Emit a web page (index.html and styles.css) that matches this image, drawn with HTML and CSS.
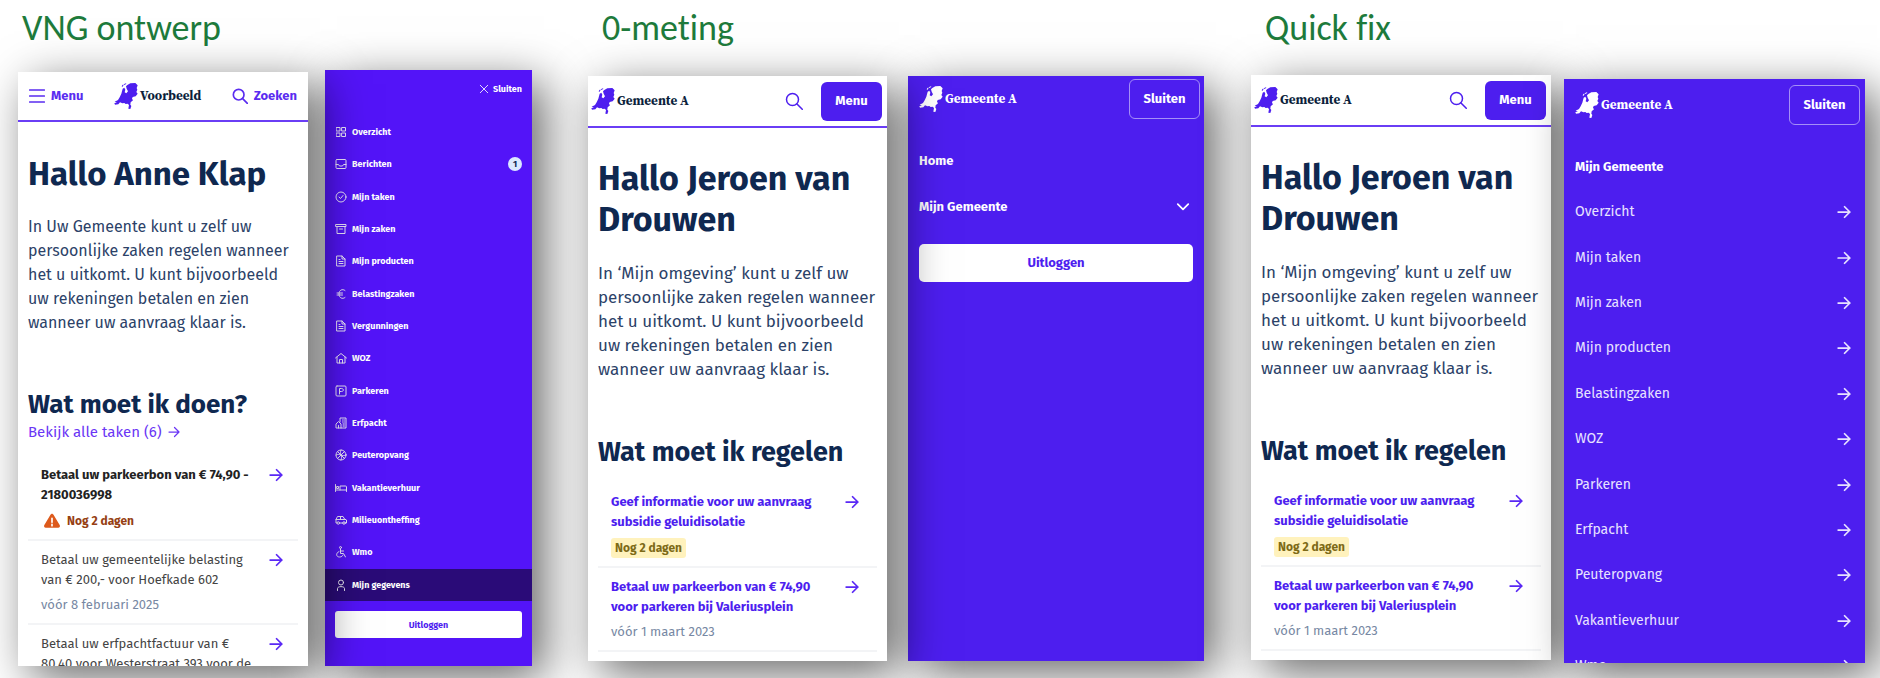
FILE: index.html
```html
<!DOCTYPE html>
<html lang="nl">
<head>
<meta charset="utf-8">
<title>Vergelijking mobiel menu</title>
<link rel="stylesheet" href="styles.css">
</head>
<body>
<svg class="defs" aria-hidden="true">
  <symbol id="nl" viewBox="0 0 70 78">
    <path fill-rule="evenodd" d="M39 6 48 1 63 0 70 7 67 15 69 20 66 27 70 32 64 40 55 42 53 47 56 52 49 58 48 65 51 69 48 78 42 77 44 66 40 62 34 63 30 60 24 61 17 58 12 64 2 65 0 60 8 59 1 56 11 51 16 43 21 32 25 17 30 14 33 20 31 28 36 31 41 25 37 17 35 10Z"/>
    <path d="M22 10l3-5 3 1-4 6zM28 4l7-3 1 2-7 3z"/>
  </symbol>
  <symbol id="search" viewBox="0 0 24 24"><circle cx="10" cy="10" r="8"/><path d="m16 16 7 7"/></symbol>
  <symbol id="bars" viewBox="0 0 24 24"><path d="M1 3h22M1 12h22M1 21h22"/></symbol>
  <symbol id="arrow" viewBox="0 0 24 24"><path d="M2 12h20M13 3l9 9-9 9"/></symbol>
  <symbol id="chevron" viewBox="0 0 24 24"><path d="m3 7 9 9 9-9"/></symbol>
  <symbol id="close" viewBox="0 0 24 24"><path d="m3 3 18 18M21 3 3 21"/></symbol>
  <symbol id="warn" viewBox="0 0 24 24"><path d="M12 1c1 0 2 1 2.500 2L23.500 18c1 2 0 4-2 4h-19c-2 0-3-2-2-4L9.500 3c.5-1 1.500-2 2.500-2z" fill="#dd5a1c" stroke="none"/><path d="M12 8v6M12 17v2" stroke="#fff"/></symbol>
  <symbol id="grid" viewBox="0 0 24 24"><path d="M3 3h7v7H3zM14 3h7v7h-7zM3 14h7v7H3zM14 14h7v7h-7z"/></symbol>
  <symbol id="inbox" viewBox="0 0 24 24"><rect x="2" y="3" width="20" height="18" rx="2"/><path d="M2 13h5l2 3h6l2-3h5"/></symbol>
  <symbol id="check" viewBox="0 0 24 24"><circle cx="12" cy="12" r="10"/><path d="m8 12 3 3 5-6"/></symbol>
  <symbol id="archive" viewBox="0 0 24 24"><path d="M2 3h20v4H2zM4 7v14h16V7M9 12h6"/></symbol>
  <symbol id="doc" viewBox="0 0 24 24"><path d="M4 2h10l6 6v14H4zM14 2v6h6M8 9h2M8 13h8M8 17h8"/></symbol>
  <symbol id="euro" viewBox="0 0 24 24"><path d="M20 5c-5-4-12-1-12 7s7 11 12 7M4 10h11M4 14h11"/></symbol>
  <symbol id="home" viewBox="0 0 24 24"><path d="m1 12 11-9 11 9M4 10v12h16V10M9 22v-7h6v7"/></symbol>
  <symbol id="park" viewBox="0 0 24 24"><rect x="2" y="2" width="20" height="20" rx="2"/><path d="M9 18V7h4c5 0 5 6 0 6H9"/></symbol>
  <symbol id="building" viewBox="0 0 24 24"><path d="M10 10V2h12v20H2v-8l5-5 5 5v8M7 22v-5M15 6h1M18 6h1M15 10h1M18 10h1M16 14h1M18 14h1M16 18h1M18 18h1"/></symbol>
  <symbol id="ball" viewBox="0 0 24 24"><circle cx="12" cy="12" r="10"/><path d="M5 5l14 14M19 5 5 19M12 2c-2 4-1 7 0 10s2 6 0 10M2 12c4-2 7-1 10 0s6 2 10 0"/></symbol>
  <symbol id="bed" viewBox="0 0 24 24"><path d="M1 5v14M1 16h22M23 19v-9a2 2 0 0 0-2-2H10v8M4 9h3v4H4z"/></symbol>
  <symbol id="car" viewBox="0 0 24 24"><path d="M4 18H2v-7l3-6h11l3 5 4 2v6h-2M9 18h7M2 11h17M11 5v6"/><circle cx="6.500" cy="18" r="2.500"/><circle cx="18" cy="18" r="2.500"/></symbol>
  <symbol id="wheel" viewBox="0 0 24 24"><circle cx="11" cy="3" r="2"/><path d="M11 6v9h6l4 7M11 10h6M8 11c-7 3-6 11 1 11 4 0 6-2 7-4"/></symbol>
  <symbol id="user" viewBox="0 0 24 24"><circle cx="12" cy="7" r="5"/><path d="M5 23v-4c0-5 14-5 14 0v4"/></symbol>
</svg>

<main class="board">
  <section class="group group-design">
    <h2 class="title">VNG ontwerp</h2>
    <div class="screens">
      <article class="screen front design">
        <header class="bar">
          <button class="plain"><svg class="ico i16"><use href="#bars"/></svg>Menu</button>
          <span class="brand"><svg class="logo"><use href="#nl"/></svg>Voorbeeld</span>
          <button class="plain"><svg class="ico i16"><use href="#search"/></svg>Zoeken</button>
        </header>
        <div class="content">
          <h1>Hallo Anne Klap</h1>
          <p class="intro">In Uw Gemeente kunt u zelf uw<br>persoonlijke zaken regelen wanneer<br>het u uitkomt. U kunt bijvoorbeeld<br>uw rekeningen betalen en zien<br>wanneer uw aanvraag klaar is.</p>
          <h2 class="sub">Wat moet ik doen?</h2>
          <a class="all" href="#taken">Bekijk alle taken (6)<svg class="ico i12"><use href="#arrow"/></svg></a>
          <ul class="tasks">
            <li><a href="#t1"><strong>Betaal uw parkeerbon van € 74,90 -<br>2180036998</strong><svg class="ico i14"><use href="#arrow"/></svg></a>
              <span class="alert"><svg class="ico i16"><use href="#warn"/></svg>Nog 2 dagen</span></li>
            <li><a href="#t2"><span>Betaal uw gemeentelijke belasting<br>van € 200,- voor Hoefkade 602</span><svg class="ico i14"><use href="#arrow"/></svg></a>
              <span class="date">vóór 8 februari 2025</span></li>
            <li><a href="#t3"><span>Betaal uw erfpachtfactuur van €<br>80,40 voor Westerstraat 393 voor de</span><svg class="ico i14"><use href="#arrow"/></svg></a></li>
          </ul>
        </div>
      </article>
      <nav class="screen icon-menu" aria-label="Menu ontwerp">
        <div class="close-row"><button class="plain"><svg class="ico i10"><use href="#close"/></svg>Sluiten</button></div>
        <ul>
          <li><a href="#m"><svg class="ico i12"><use href="#grid"/></svg>Overzicht</a></li>
          <li><a href="#m"><svg class="ico i12"><use href="#inbox"/></svg>Berichten<span class="count">1</span></a></li>
          <li><a href="#m"><svg class="ico i12"><use href="#check"/></svg>Mijn taken</a></li>
          <li><a href="#m"><svg class="ico i12"><use href="#archive"/></svg>Mijn zaken</a></li>
          <li><a href="#m"><svg class="ico i12"><use href="#doc"/></svg>Mijn producten</a></li>
          <li><a href="#m"><svg class="ico i12"><use href="#euro"/></svg>Belastingzaken</a></li>
          <li><a href="#m"><svg class="ico i12"><use href="#doc"/></svg>Vergunningen</a></li>
          <li><a href="#m"><svg class="ico i12"><use href="#home"/></svg>WOZ</a></li>
          <li><a href="#m"><svg class="ico i12"><use href="#park"/></svg>Parkeren</a></li>
          <li><a href="#m"><svg class="ico i12"><use href="#building"/></svg>Erfpacht</a></li>
          <li><a href="#m"><svg class="ico i12"><use href="#ball"/></svg>Peuteropvang</a></li>
          <li><a href="#m"><svg class="ico i12"><use href="#bed"/></svg>Vakantieverhuur</a></li>
          <li><a href="#m"><svg class="ico i12"><use href="#car"/></svg>Milieuontheffing</a></li>
          <li><a href="#m"><svg class="ico i12"><use href="#wheel"/></svg>Wmo</a></li>
          <li class="active"><a href="#m"><svg class="ico i12"><use href="#user"/></svg>Mijn gegevens</a></li>
        </ul>
        <button class="logout">Uitloggen</button>
      </nav>
    </div>
  </section>

  <section class="group group-base">
    <h2 class="title">0-meting</h2>
    <div class="screens">
      <article class="screen front built">
        <header class="bar">
          <span class="brand"><svg class="logo"><use href="#nl"/></svg>Gemeente A</span>
          <button class="plain find" aria-label="Zoeken"><svg class="ico i18"><use href="#search"/></svg></button>
          <button class="solid">Menu</button>
        </header>
        <div class="content">
          <h1>Hallo Jeroen van<br>Drouwen</h1>
          <p class="intro">In ‘Mijn omgeving’ kunt u zelf uw<br>persoonlijke zaken regelen wanneer<br>het u uitkomt. U kunt bijvoorbeeld<br>uw rekeningen betalen en zien<br>wanneer uw aanvraag klaar is.</p>
          <h2 class="sub">Wat moet ik regelen</h2>
          <ul class="tasks">
            <li><a href="#t1"><strong>Geef informatie voor uw aanvraag<br>subsidie geluidisolatie</strong><svg class="ico i14"><use href="#arrow"/></svg></a>
              <span class="tag">Nog 2 dagen</span></li>
            <li><a href="#t2"><strong>Betaal uw parkeerbon van € 74,90<br>voor parkeren bij Valeriusplein</strong><svg class="ico i14"><use href="#arrow"/></svg></a>
              <span class="date">vóór 1 maart 2023</span></li>
          </ul>
        </div>
      </article>
      <nav class="screen flat-menu" aria-label="Menu 0-meting">
        <header class="menu-bar">
          <span class="brand"><svg class="logo"><use href="#nl"/></svg>Gemeente A</span>
          <button class="outline">Sluiten</button>
        </header>
        <ul>
          <li><a href="#home"><strong>Home</strong></a></li>
          <li><a href="#mijn"><strong>Mijn Gemeente</strong><svg class="ico i14"><use href="#chevron"/></svg></a></li>
        </ul>
        <button class="logout">Uitloggen</button>
      </nav>
    </div>
  </section>

  <section class="group group-fix">
    <h2 class="title">Quick fix</h2>
    <div class="screens">
      <article class="screen built">
        <header class="bar">
          <span class="brand"><svg class="logo"><use href="#nl"/></svg>Gemeente A</span>
          <button class="plain find" aria-label="Zoeken"><svg class="ico i18"><use href="#search"/></svg></button>
          <button class="solid">Menu</button>
        </header>
        <div class="content">
          <h1>Hallo Jeroen van<br>Drouwen</h1>
          <p class="intro">In ‘Mijn omgeving’ kunt u zelf uw<br>persoonlijke zaken regelen wanneer<br>het u uitkomt. U kunt bijvoorbeeld<br>uw rekeningen betalen en zien<br>wanneer uw aanvraag klaar is.</p>
          <h2 class="sub">Wat moet ik regelen</h2>
          <ul class="tasks">
            <li><a href="#t1"><strong>Geef informatie voor uw aanvraag<br>subsidie geluidisolatie</strong><svg class="ico i14"><use href="#arrow"/></svg></a>
              <span class="tag">Nog 2 dagen</span></li>
            <li><a href="#t2"><strong>Betaal uw parkeerbon van € 74,90<br>voor parkeren bij Valeriusplein</strong><svg class="ico i14"><use href="#arrow"/></svg></a>
              <span class="date">vóór 1 maart 2023</span></li>
          </ul>
        </div>
      </article>
      <nav class="screen front flat-menu" aria-label="Menu quick fix">
        <header class="menu-bar">
          <span class="brand"><svg class="logo"><use href="#nl"/></svg>Gemeente A</span>
          <button class="outline">Sluiten</button>
        </header>
        <ul>
          <li><a href="#m"><strong>Mijn Gemeente</strong></a></li>
          <li><a href="#m">Overzicht<svg class="ico i14"><use href="#arrow"/></svg></a></li>
          <li><a href="#m">Mijn taken<svg class="ico i14"><use href="#arrow"/></svg></a></li>
          <li><a href="#m">Mijn zaken<svg class="ico i14"><use href="#arrow"/></svg></a></li>
          <li><a href="#m">Mijn producten<svg class="ico i14"><use href="#arrow"/></svg></a></li>
          <li><a href="#m">Belastingzaken<svg class="ico i14"><use href="#arrow"/></svg></a></li>
          <li><a href="#m">WOZ<svg class="ico i14"><use href="#arrow"/></svg></a></li>
          <li><a href="#m">Parkeren<svg class="ico i14"><use href="#arrow"/></svg></a></li>
          <li><a href="#m">Erfpacht<svg class="ico i14"><use href="#arrow"/></svg></a></li>
          <li><a href="#m">Peuteropvang<svg class="ico i14"><use href="#arrow"/></svg></a></li>
          <li><a href="#m">Vakantieverhuur<svg class="ico i14"><use href="#arrow"/></svg></a></li>
          <li><a href="#m">Wmo<svg class="ico i14"><use href="#arrow"/></svg></a></li>
        </ul>
      </nav>
    </div>
  </section>
</main>
</body>
</html>
```

FILE: styles.css
```css
* { box-sizing: border-box; }

:root {
  --violet: #4d1eef;
  --navy: #0f2850;
  --body: #2c4268;
}

body {
  margin: 0;
  background: #fff;
  color: var(--body);
  font: 13px/20px "Fira Sans", "Noto Sans", sans-serif;
}

h1, h2, p, ul { margin: 0; padding: 0; }
ul { list-style: none; }
a { color: inherit; text-decoration: none; }
button { font: inherit; color: inherit; background: none; border: 0; padding: 0; }
h1, .sub, strong { font-weight: 700; }

.defs { position: absolute; width: 0; height: 0; }

.ico { flex: none; fill: none; stroke: currentColor; stroke-width: 2.5; stroke-linecap: round; stroke-linejoin: round; }
.i10 { width: 10px; height: 10px; }
.i12 { width: 12px; height: 12px; }
.i14 { width: 14px; height: 14px; stroke-width: 3; }
.i16 { width: 16px; height: 16px; }
.i18 { width: 18px; height: 18px; }

/* Board: three groups of two screens */
.board {
  display: grid;
  grid-template-columns: 570fr 663fr 614fr;
  height: 100vh;
  padding: 0 15px 0 18px;
  overflow: hidden;
}
.group { display: flex; flex-direction: column; min-height: 0; }
.group-design { padding-right: 56px; }
.group-base { padding-right: 47px; }

.title {
  padding: 8px 4px 0;
  color: #1e7b3c;
  font: 400 36px/40px Calibri, Carlito, Lato, sans-serif;
  font-variant-ligatures: none;
}
.group-base .title, .group-fix .title { padding-left: 14px; }

.screens { flex: 1; display: grid; grid-template-rows: minmax(0, 1fr); min-height: 0; }
.group-design .screens { grid-template-columns: 290fr 207fr; gap: 17px; padding: 22px 0 12px; }
.group-base .screens { grid-template-columns: 299fr 296fr; gap: 21px; padding: 28px 0 17px; }
.group-fix .screens { grid-template-columns: 300fr 301fr; gap: 13px; padding: 27px 0 15px; }
.group-fix .built { margin-bottom: 3px; }
.group-fix .flat-menu { margin-top: 4px; }
.design { margin-top: 2px; }

.screen {
  display: flex;
  flex-direction: column;
  min-width: 0;
  overflow: hidden;
  background: #fff;
  box-shadow: 12px 12px 44px rgba(0, 0, 0, .6);
}
.front { position: relative; z-index: 1; }

/* Page header */
.bar {
  display: flex;
  align-items: center;
  flex: none;
  height: 52px;
  border-bottom: 2px solid #6a3df5;
}
.design .bar { height: 50px; padding: 0 11px; justify-content: space-between; color: #5a2cf0; }
.plain { display: flex; align-items: center; gap: 6px; font-weight: 700; }
.brand {
  display: flex;
  align-items: center;
  gap: 2px;
  color: #0c1f3c;
  font: 700 13px/20px "Source Serif Pro", "Source Serif 4", "Noto Serif", "Liberation Serif", serif;
}
.logo { width: 24px; height: 26px; fill: var(--violet); }
.built .bar { padding: 0 5px 0 3px; }
.find { margin-left: auto; color: var(--violet); }
.find .ico { stroke-width: 2; }
.solid {
  margin-left: 18px;
  width: 61px;
  height: 39px;
  border-radius: 6px;
  background: var(--violet);
  color: #fff;
  font-weight: 700;
}

/* Page content */
.content { padding: 32px 10px 0; white-space: nowrap; }
.built .content { padding: 30px 10px 0; }
h1 { color: var(--navy); font-size: 33px; line-height: 41px; }
.built h1 { font-size: 34px; }
.intro { padding-top: 20px; font-size: 16px; line-height: 24px; }
.built .intro { padding-top: 22px; font-size: 17px; }
.sub { padding-top: 53px; color: var(--navy); font-size: 26px; line-height: 34px; }
.built .sub { font-size: 27px; }
.all { display: flex; align-items: center; gap: 6px; color: #6a35f5; font-size: 15px; line-height: 20px; }

.tasks { padding-top: 14px; }
.tasks li { padding: 9px 15px 8px 13px; border-bottom: 2px solid #f3f4f6; }
.tasks a { display: flex; justify-content: space-between; color: #444; }
.tasks a strong { color: #222; }
.tasks a .ico { margin-top: 3px; color: #5a28f5; }
.built .tasks a, .built .tasks a strong { color: var(--violet); }
.built .tasks li { padding-right: 18px; }
.date { display: block; padding-top: 5px; color: #7788a3; }
.alert { display: flex; align-items: center; gap: 7px; padding: 6px 3px 0; color: #963f14; font-size: 12px; font-weight: 700; }
.tag {
  display: inline-block;
  margin-top: 6px;
  padding: 0 4px;
  border-radius: 3px;
  background: #fff2bd;
  color: #7d6a17;
  font-size: 12px;
  line-height: 20px;
  font-weight: 700;
}

/* Menu with icons */
.icon-menu { background: #5314f8; color: #fff; font-size: 9px; line-height: 12px; font-weight: 700; }
.close-row { display: flex; justify-content: flex-end; padding: 13px 10px 21px; }
.close-row .plain { gap: 4px; }
.icon-menu ul { flex: 1; display: grid; grid-auto-rows: 1fr; }
.icon-menu a { display: flex; align-items: center; gap: 5px; height: 100%; padding: 0 10px; }
.icon-menu a .ico { stroke-width: 2; opacity: .9; }
.active { background: #2a0b78; }
.count {
  display: grid;
  place-items: center;
  width: 14px;
  height: 14px;
  margin-left: auto;
  border-radius: 50%;
  background: #dbe9ff;
  color: #0f2850;
}
.icon-menu .logout { height: 27px; margin: 10px 10px 28px; border-radius: 3px; font-size: 9px; }
.logout { flex: none; background: #fff; color: var(--violet); font-weight: 700; }

/* Plain menu */
.flat-menu { background: var(--violet); color: #fff; }
.menu-bar { display: flex; align-items: center; justify-content: space-between; flex: none; padding: 3px 4px 0 11px; }
.group-fix .menu-bar { padding: 6px 5px 0 11px; }
.menu-bar .brand { color: #fff; }
.menu-bar .logo { fill: #fff; }
.outline { width: 71px; height: 40px; border: 1px solid #a58ff7; border-radius: 6px; font-weight: 700; }
.flat-menu ul { padding-top: 19px; }
.flat-menu a { display: flex; align-items: center; justify-content: space-between; min-height: 46px; padding: 0 14px 0 11px; }
.group-fix .flat-menu ul { flex: 1; display: grid; grid-auto-rows: 8.75%; min-height: 0; }
.group-fix .flat-menu li { display: grid; }
.group-fix .flat-menu a { min-height: 0; color: #e8e2ff; font-size: 14px; }
.group-fix .flat-menu strong { color: #fff; font-size: 13px; }
.flat-menu .logout { height: 38px; margin: 14px 11px 0; border-radius: 5px; }
.icon-menu .ico { stroke-width: 2; }
```
